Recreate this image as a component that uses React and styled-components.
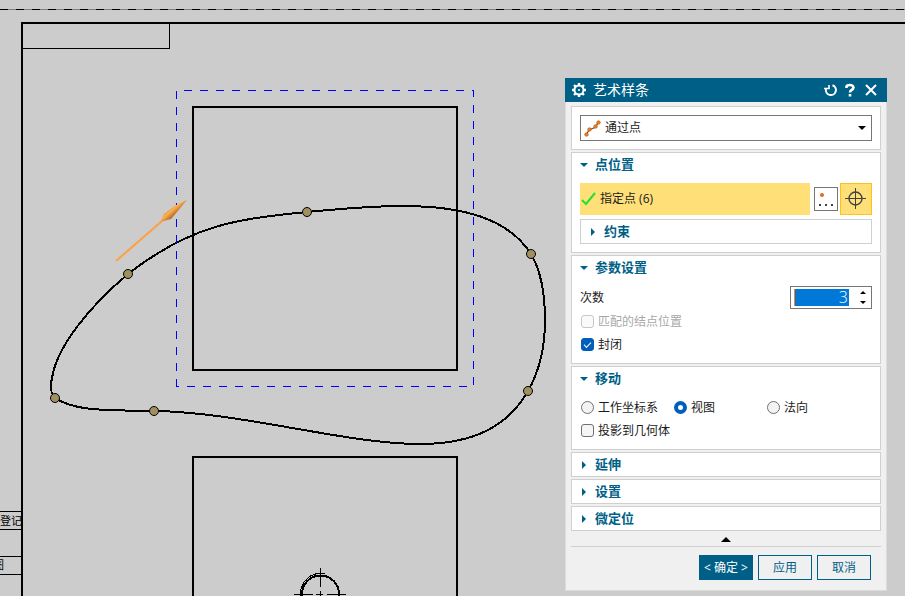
import React, { useState } from 'react';
import styled, { createGlobalStyle, css } from 'styled-components';

const GlobalStyle = createGlobalStyle`
    *, *::before, *::after {
        box-sizing: border-box;
    }
    body {
        margin: 0;
        background-color: #cccccc;
        color: #1a1a1a;
        font-family: "Open Sans", "Noto Sans CJK SC", sans-serif;
        font-size: 12px;
        line-height: 16px;
    }
    button, input, select {
        font: inherit;
        color: inherit;
        margin: 0;
    }
`

const Workspace = styled.main`
    position: relative;
    height: 100vh;
    min-height: 592px;
    overflow: hidden;
`

const Sheet = styled.svg`
    display: block;
    width: 100%;
    height: 100%;
    font-family: "Noto Sans CJK SC", sans-serif;
    font-size: 11px;
`

const Dialog = styled.section`
    position: absolute;
    top: 78px;
    left: 565px;
    right: 18px;
    min-width: 322px;
    background-color: #f0f0f0;
    border: 1px solid #dcdcdc;
    border-top: none;
`

const TitleBar = styled.header`
    display: flex;
    align-items: center;
    height: 24px;
    margin: 0 -1px;
    padding: 0 8px 0 6px;
    gap: 6px;
    background-color: #005f87;
    color: white;
`

const Title = styled.h1`
    flex: 1;
    margin: 0;
    font-size: 14px;
    font-weight: normal;
    line-height: 24px;
`

const TitleButton = styled.button`
    display: flex;
    padding: 0;
    border: none;
    background: none;
    color: white;
`

const TitleActions = styled.div`
    display: flex;
    align-items: center;
    gap: 8px;
`

const Body = styled.div`
    display: flex;
    flex-direction: column;
    gap: 2px;
    padding: 4px 5px 0;
`

const Group = styled.section`
    border: 1px solid #d0d0d0;
    background-color: white;
    padding: ${ props => props.$open ? "0 8px 7px" : "0 8px" };
`

const GroupTitle = styled.h2`
    margin: 0 0 ${ props => props.$open ? "6px" : "0" };
    font-size: 13px;
    line-height: 23px;
`

const GroupToggle = styled.button`
    display: flex;
    align-items: center;
    gap: 7px;
    width: 100%;
    height: 23px;
    padding: 0;
    border: none;
    background: none;
    color: #005f87;
    text-align: left;
`

const TypeBox = styled.div`
    display: flex;
    align-items: center;
    position: relative;
    height: 26px;
    margin: 8px 0 1px;
    border: 1px solid #767676;
    background-color: white;

    > svg {
        position: absolute;
        pointer-events: none;
    }
    > svg:first-child {
        left: 3px;
    }
    > svg:last-child {
        right: 5px;
    }
`

const TypeSelect = styled.select`
    appearance: none;
    width: 100%;
    height: 24px;
    padding: 0 20px 0 24px;
    border: none;
    background: none;
`

const PointRow = styled.div`
    display: flex;
    align-items: center;
    height: 34px;
    margin-bottom: 3px;
`

const PointPick = styled.button`
    display: flex;
    flex: 1;
    align-items: center;
    gap: 4px;
    height: 32px;
    margin-right: 4px;
    padding: 0 1px;
    border: none;
    background-color: #ffe078;
`

const ToolButton = styled.button`
    display: flex;
    align-items: center;
    justify-content: center;
    padding: 0;
    ${ props => props.$active ? css`
        width: 32px;
        height: 32px;
        border: 1px solid #ffc020;
        background-color: #ffe078;
    ` : css`
        width: 24px;
        height: 24px;
        margin-right: 2px;
        border: 1px solid #767676;
        background-color: white;
    ` }
`

const NestedGroup = styled.div`
    margin-bottom: 1px;
    padding: 0 8px;
    border: 1px solid #d0d0d0;
`

const FieldRow = styled.div`
    display: flex;
    align-items: center;
    justify-content: space-between;
    height: 25px;
`

const SpinBox = styled.div`
    display: flex;
    align-items: center;
    width: 82px;
    height: 23px;
    padding: 0 0 0 3px;
    border: 1px solid #767676;
`

const SpinInput = styled.input`
    width: 55px;
    height: 17px;
    padding: 0 1px;
    border: none;
    border-left: 1px solid #ff8020;
    border-radius: 0;
    background-color: #0078d7;
    color: white;
    font-size: 16px;
    font-weight: 300;
    line-height: 17px;
    text-align: right;
    outline: none;
`

const SpinButtons = styled.div`
    display: flex;
    flex: 1;
    flex-direction: column;
    align-items: flex-end;
`

const SpinButton = styled.button`
    display: flex;
    align-items: center;
    height: 10px;
    padding: 0 5px;
    border: none;
    background: none;
`

const OptionRow = styled.div`
    display: grid;
    grid-template-columns: 93px 93px 1fr;
    align-items: center;
    height: 23px;
`

const Option = styled.label`
    display: flex;
    align-items: center;
    gap: 4px;
    padding-left: 1px;
    white-space: nowrap;
    color: ${ props => props.$disabled ? "#a8a8a8" : "inherit" };
`

const CheckRow = styled(Option)`
    height: 23px;
`

const Check = styled.input`
    appearance: none;
    display: grid;
    place-items: center;
    width: 13px;
    height: 13px;
    border: 1px solid #707070;
    border-radius: 3px;
    background-color: #f5f5f5;

    &:checked {
        border-color: #005fb8;
        background-color: #005fb8;
    }
    &:checked::after {
        content: "";
        width: 7px;
        height: 4px;
        margin-bottom: 2px;
        border: solid white;
        border-width: 0 0 1px 1px;
        transform: rotate(-45deg);
    }
    &:disabled {
        border-color: #c8c8c8;
        background-color: #fafafa;
    }
`

const Radio = styled.input`
    appearance: none;
    width: 13px;
    height: 13px;
    border: 1px solid #707070;
    border-radius: 50%;
    background-color: #f3f3f3;

    &:checked {
        border: 4px solid #005fb8;
        background-color: white;
    }
`

const CollapseButton = styled.button`
    display: flex;
    justify-content: center;
    height: 15px;
    margin-top: -1px;
    padding: 5px 0 0;
    border: none;
    border-bottom: 1px solid #d0d0d0;
    background: none;
`

const Footer = styled.footer`
    display: flex;
    justify-content: flex-end;
    gap: 5px;
    padding: 8px 15px 10px;
`

const ActionButton = styled.button`
    width: 54px;
    height: 25px;
    padding: 0;
    border: 1px solid #005f87;
    background-color: ${ props => props.$primary ? "#005f87" : "#f0f0f0" };
    color: ${ props => props.$primary ? "white" : "#005f87" };
    white-space: nowrap;
`

function Arrow({ open }) {
    return (
        <svg width="8" height="8" viewBox="0 0 8 8" aria-hidden="true">
            <path d={open ? "M0 2h8L4 6z" : "M2 0v8l4-4z"} fill="#005f87" />
        </svg>
    )
}

function Heading({ title, open, onToggle }) {
    return (
        <GroupTitle $open={open}>
            <GroupToggle type="button" aria-expanded={open} onClick={onToggle}>
                <Arrow open={open} />
                {title}
            </GroupToggle>
        </GroupTitle>
    )
}

function Section({ title, defaultOpen = false, children }) {
    const [open, setOpen] = useState(defaultOpen);
    return (
        <Group $open={open}>
            <Heading title={title} open={open} onToggle={() => setOpen(!open)} />
            {open && children}
        </Group>
    )
}

const splinePoints = [[128, 274], [307, 212], [531, 254], [528, 391], [154, 411], [55, 398]];

const splinePath = "M307 212C338 209 370 206 402 206C462 206 508 218 531 254"
    + "C541 271 545 294 545 320C545 346 540 370 528 391"
    + "C508 426 474 444 420 444C346 444 240 412 154 411"
    + "C110 410 76 412 55 398C51 394 50 386 52 378"
    + "C57 346 90 306 128 274C192 224 238 219 307 212Z";

function Drawing() {
    return (
        <Sheet role="img" aria-label="工程图">
            <defs>
                <linearGradient id="cone" gradientUnits="userSpaceOnUse" x1="168" y1="208" x2="175" y2="216">
                    <stop offset="0" stopColor="#e08a38" />
                    <stop offset="0.4" stopColor="#ffb050" />
                    <stop offset="1" stopColor="#a8601c" />
                </linearGradient>
            </defs>
            <g fill="none" stroke="#000" shapeRendering="crispEdges">
                <line x1="0" y1="9.5" x2="100%" y2="9.5" stroke="#808080" />
                <line x1="0" y1="9.5" x2="100%" y2="9.5" strokeDasharray="8 8" />
                <line x1="21" y1="23" x2="100%" y2="23" strokeWidth="2" />
                <line x1="22" y1="23" x2="22" y2="100%" strokeWidth="2" />
                <path d="M23 48.5H169.5V24" />
                <path d="M0 511.5H22M0 529.5H22M0 556.5H22M0 574.5H22" />
                <rect x="193" y="107" width="264" height="263" strokeWidth="2" />
                <rect x="193" y="457" width="264" height="263" strokeWidth="2" />
                <path d="M320.5 568V587M320.5 591V598M294 594.5H313M316 594.5H323M327 594.5H346M315 573.5H325" />
                <circle cx="320.5" cy="594" r="18.5" strokeWidth="2" />
                <path d="M300.5 596A20.5 20.5 0 0 1 318 573.5" />
                <path d={splinePath} strokeWidth="2" />
            </g>
            <g fill="none" stroke="#0000ff" strokeDasharray="8 8" shapeRendering="crispEdges">
                <path d="M184 90.5H474" />
                <path d="M176.5 91V386" />
                <path d="M473.5 90V386" strokeDashoffset="1" />
                <path d="M176 386.5H474" strokeDashoffset="5" />
            </g>
            <text x="0" y="525">登记</text>
            <text x="-7" y="569">图</text>
            {splinePoints.map(([x, y]) => (
                <circle key={x} cx={x} cy={y} r="4.5" fill="#a09060" stroke="#000" />
            ))}
            <path d="M116 261L162 221" stroke="#ffa040" strokeWidth="2" />
            <path d="M160 222L164 214L176 205L187 200L177 212L171 219Z" fill="url(#cone)" />
        </Sheet>
    )
}

function SplineDialog() {
    const [degree, setDegree] = useState(3);
    const [closed, setClosed] = useState(true);
    const [project, setProject] = useState(false);
    const [move, setMove] = useState("view");
    const [constraint, setConstraint] = useState(false);
    const moveOptions = { wcs: "工作坐标系", view: "视图", normal: "法向" };

    return (
        <Dialog role="dialog" aria-labelledby="dialog-title">
            <TitleBar>
                <svg width="16" height="16" viewBox="0 0 16 16" fill="none" stroke="white" aria-hidden="true">
                    <circle cx="8" cy="8" r="4.5" strokeWidth="2" />
                    <path d="M8 1V3M8 13V15M1 8H3M13 8H15M3 3L4.5 4.5M11.5 11.5L13 13M3 13L4.5 11.5M11.5 4.5L13 3" strokeWidth="2.4" />
                    <circle cx="8" cy="8" r="1" fill="white" stroke="none" />
                </svg>
                <Title id="dialog-title">艺术样条</Title>
                <TitleActions>
                    <TitleButton type="button" aria-label="重置">
                        <svg width="13" height="14" viewBox="0 0 13 14" fill="none" stroke="white">
                            <path d="M8.5 2.3A5 5 0 1 1 2 6" strokeWidth="2" />
                            <path d="M0 5.5H5V2" strokeWidth="1.6" />
                        </svg>
                    </TitleButton>
                    <TitleButton type="button" aria-label="帮助">
                        <svg width="10" height="14" viewBox="0 0 10 14" fill="none" stroke="white" strokeWidth="2.6">
                            <path d="M1.5 5V3.5Q2 2 5 2T8.5 4.5Q8.5 6 6.5 7Q5 8 5 9.5M5 11V13.5" />
                        </svg>
                    </TitleButton>
                    <TitleButton type="button" aria-label="关闭">
                        <svg width="16" height="14" viewBox="0 0 16 14" fill="none" stroke="white" strokeWidth="2">
                            <path d="M3 2L13 12M13 2L3 12" />
                        </svg>
                    </TitleButton>
                </TitleActions>
            </TitleBar>
            <Body>
                <Group $open>
                    <TypeBox>
                        <svg width="18" height="18" viewBox="0 0 18 18" aria-hidden="true">
                            <path d="M2 16L5 11L12 8L14 3" fill="none" stroke="#555" strokeWidth="1.3" />
                            <g fill="#ec7c22" stroke="#b85a10" strokeWidth="0.6">
                                <circle cx="2.5" cy="15.5" r="1.8" />
                                <circle cx="5.5" cy="10.5" r="1.8" />
                                <circle cx="11.5" cy="7.5" r="1.8" />
                                <circle cx="14.5" cy="3.5" r="1.8" />
                            </g>
                        </svg>
                        <TypeSelect aria-label="类型" defaultValue="through">
                            <option value="through">通过点</option>
                            <option value="poles">根据极点</option>
                        </TypeSelect>
                        <svg width="8" height="4" viewBox="0 0 8 4" aria-hidden="true">
                            <path d="M0 0H8L4 4Z" />
                        </svg>
                    </TypeBox>
                </Group>
                <Section title="点位置" defaultOpen>
                    <PointRow>
                        <PointPick type="button">
                            <svg width="15" height="14" viewBox="0 0 15 14" fill="none" stroke="#22e030" strokeWidth="2" aria-hidden="true">
                                <path d="M1 8L5 12L14 1" />
                            </svg>
                            指定点 (6)
                        </PointPick>
                        <ToolButton type="button" aria-label="点对话框">
                            <svg width="22" height="22" viewBox="0 0 22 22">
                                <circle cx="7" cy="7" r="2" fill="#e06c18" />
                                <path d="M4 16h2v2h-2zM10 16h2v2h-2zM16 16h2v2h-2z" fill="#404040" />
                            </svg>
                        </ToolButton>
                        <ToolButton type="button" $active aria-label="光标位置">
                            <svg width="22" height="22" viewBox="0 0 22 22" fill="none" stroke="#404040">
                                <circle cx="10.5" cy="10.5" r="6.5" strokeWidth="1.4" />
                                <path d="M0 10.5H21M10.5 0V21" />
                            </svg>
                        </ToolButton>
                    </PointRow>
                    <NestedGroup>
                        <Heading title="约束" open={constraint} onToggle={() => setConstraint(!constraint)} />
                    </NestedGroup>
                </Section>
                <Section title="参数设置" defaultOpen>
                    <FieldRow>
                        <label htmlFor="degree">次数</label>
                        <SpinBox>
                            <SpinInput id="degree" value={degree} onChange={e => setDegree(Number(e.target.value) || 1)} />
                            <SpinButtons>
                                <SpinButton type="button" aria-label="增加" onClick={() => setDegree(degree + 1)}>
                                    <svg width="6" height="3" viewBox="0 0 6 3"><path d="M0 3H6L3 0Z" /></svg>
                                </SpinButton>
                                <SpinButton type="button" aria-label="减少" onClick={() => setDegree(Math.max(1, degree - 1))}>
                                    <svg width="6" height="3" viewBox="0 0 6 3"><path d="M0 0H6L3 3Z" /></svg>
                                </SpinButton>
                            </SpinButtons>
                        </SpinBox>
                    </FieldRow>
                    <CheckRow $disabled>
                        <Check type="checkbox" disabled />
                        匹配的结点位置
                    </CheckRow>
                    <CheckRow>
                        <Check type="checkbox" checked={closed} onChange={e => setClosed(e.target.checked)} />
                        封闭
                    </CheckRow>
                </Section>
                <Section title="移动" defaultOpen>
                    <OptionRow>
                        {Object.keys(moveOptions).map((key) => (
                            <Option key={key}>
                                <Radio type="radio" name="move" checked={move === key} onChange={() => setMove(key)} />
                                {moveOptions[key]}
                            </Option>
                        ))}
                    </OptionRow>
                    <CheckRow>
                        <Check type="checkbox" checked={project} onChange={e => setProject(e.target.checked)} />
                        投影到几何体
                    </CheckRow>
                </Section>
                <Section title="延伸" />
                <Section title="设置" />
                <Section title="微定位" />
                <CollapseButton type="button" aria-label="收起">
                    <svg width="10" height="5" viewBox="0 0 10 5"><path d="M0 5H10L5 0Z" /></svg>
                </CollapseButton>
            </Body>
            <Footer>
                <ActionButton type="button" $primary>&lt; 确定 &gt;</ActionButton>
                <ActionButton type="button">应用</ActionButton>
                <ActionButton type="button">取消</ActionButton>
            </Footer>
        </Dialog>
    )
}

export default function App() {
    return (
        <>
            <GlobalStyle />
            <Workspace>
                <Drawing />
                <SplineDialog />
            </Workspace>
        </>
    )
}
